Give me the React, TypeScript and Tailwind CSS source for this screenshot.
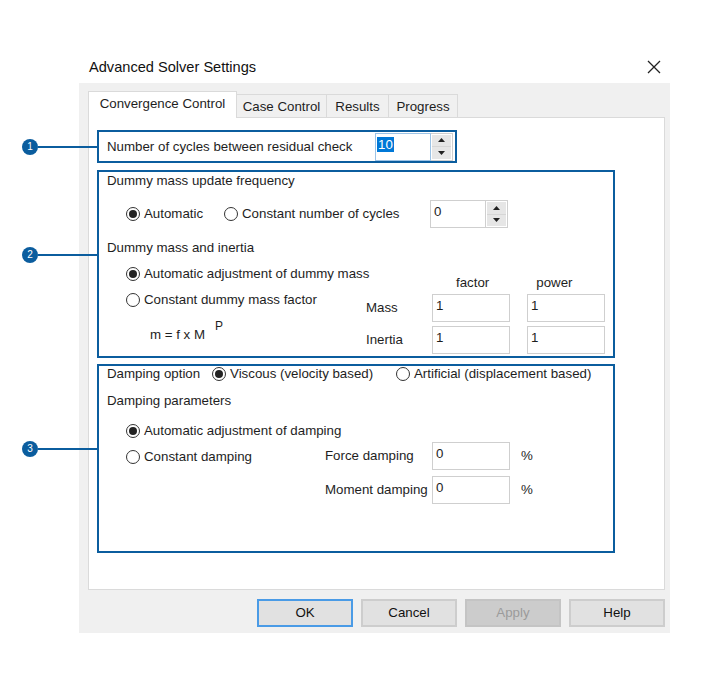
import React from "react";

const BLUE = "border-[#0b5d9e]";

function Radio({ checked, label }: { checked?: boolean; label: string }) {
  return (
    <div className="flex items-center gap-[4px] whitespace-nowrap">
      <span className="flex h-[14px] w-[14px] shrink-0 items-center justify-center rounded-full border border-[#333] bg-white">
        {checked && <span className="h-[8px] w-[8px] rounded-full bg-[#222]" />}
      </span>
      <span>{label}</span>
    </div>
  );
}

function Field({ value }: { value: string }) {
  return (
    <div className="h-[28px] w-[78px] border border-[#cfcfcf] bg-white pl-[3px] pt-[3px] leading-[15px]">
      {value}
    </div>
  );
}

function Spin({ value, focused }: { value: string; focused?: boolean }) {
  return (
    <div className="flex h-[28px] w-[78px]">
      <div
        className={
          focused
            ? "flex-1 border border-[#9cc3e6] bg-white pl-[1px] pt-[3px] leading-[15px]"
            : "flex-1 border border-[#cfcfcf] bg-white pl-[3px] pt-[3px] leading-[15px]"
        }
      >
        {focused ? <span className="bg-[#0078d7] px-[1px] text-white">{value}</span> : value}
      </div>
      <div className="flex w-[22px] flex-col border border-l-0 border-[#cfcfcf] bg-white p-[1px]">
        <div className="flex flex-1 items-center justify-center border-b border-[#d6d6d6] bg-[#e6e6e6]">
          <svg width="7" height="4" viewBox="0 0 7 4"><path d="M0 4 L3.5 0 L7 4 Z" fill="#222" /></svg>
        </div>
        <div className="flex flex-1 items-center justify-center bg-[#e6e6e6]">
          <svg width="7" height="4" viewBox="0 0 7 4"><path d="M0 0 L3.5 4 L7 0 Z" fill="#222" /></svg>
        </div>
      </div>
    </div>
  );
}

function Callout({ n, top }: { n: string; top: number }) {
  return (
    <div className="absolute left-[22px] flex items-center" style={{ top: top - 8 }}>
      <div className="flex h-[16px] w-[16px] items-center justify-center rounded-full bg-[#0b5d9e] text-[10px] text-white">
        {n}
      </div>
      <div className="h-[1.5px] w-[59px] bg-[#0b5d9e]" />
    </div>
  );
}

function Btn({ label, primary, disabled }: { label: string; primary?: boolean; disabled?: boolean }) {
  const cls = primary
    ? "border-[#4a9be6] bg-[#e1e1e1] text-[#111]"
    : disabled
    ? "border-[#c4c4c4] bg-[#cccccc] text-[#9b9b9b]"
    : "border-[#cdcdcd] bg-[#e1e1e1] text-[#111]";
  return (
    <div className={`flex h-[28px] w-[96px] items-center justify-center border-2 ${cls}`}>{label}</div>
  );
}

export default function App() {
  return (
    <div
      className="relative h-[679px] w-[701px] bg-white text-[13.3px] leading-[16px] text-[#1e1e1e]"
      style={{ fontFamily: '"Liberation Sans", Arial, sans-serif' }}
    >
      <div className="ml-[79px] w-[591px] pt-[47px]">
        {/* title bar */}
        <div className="flex h-[36px] items-center justify-between pl-[10px] pr-[8px] pt-[4px]">
          <span className="text-[14.6px] text-[#111]">Advanced Solver Settings</span>
          <svg width="14" height="14" viewBox="0 0 14 14" className="mr-[1px]">
            <path d="M1 1 L13 13 M13 1 L1 13" stroke="#222" strokeWidth="1.3" />
          </svg>
        </div>

        {/* body */}
        <div className="flex h-[550px] flex-col bg-[#f0f0f0] pl-[9px] pr-[5px] pt-[8px]">
          {/* tabs */}
          <div className="relative z-10 flex h-[27px] items-end">
            <div className="flex h-[27px] w-[149px] items-center justify-center border border-b-0 border-[#dadada] bg-white pb-[2px]">
              Convergence Control
            </div>
            <div className="mb-[1px] flex h-[23px] w-[90px] items-center justify-center border border-l-0 border-b-0 border-[#dadada] bg-[#f0f0f0] pt-[2px]">
              Case Control
            </div>
            <div className="mb-[1px] flex h-[23px] w-[62px] items-center justify-center border border-l-0 border-b-0 border-[#dadada] bg-[#f0f0f0] pt-[2px]">
              Results
            </div>
            <div className="mb-[1px] flex h-[23px] w-[69px] items-center justify-center border border-l-0 border-b-0 border-[#dadada] bg-[#f0f0f0] pt-[2px]">
              Progress
            </div>
          </div>

          {/* panel */}
          <div className="-mt-[1px] flex h-[473px] flex-col border border-[#dadada] bg-white pl-[8px] pt-[12px]">
            {/* section 1 */}
            <div className={`flex h-[33px] w-[360px] items-center justify-between border-2 ${BLUE} pl-[8px] pr-[2px]`}>
              <span>Number of cycles between residual check</span>
              <Spin value="10" focused />
            </div>

            {/* section 2 */}
            <div className={`mt-[7px] flex h-[188px] w-[518px] flex-col border-2 ${BLUE} pl-[8px]`}>
              <div className="h-[17px] pt-[1px]">Dummy mass update frequency</div>
              <div className="mt-[11px] flex h-[28px] items-center">
                <div className="ml-[19px] w-[98px]">
                  <Radio checked label="Automatic" />
                </div>
                <div className="w-[206px]">
                  <Radio label="Constant number of cycles" />
                </div>
                <Spin value="0" />
              </div>
              <div className="mt-[12px] h-[16px]">Dummy mass and inertia</div>
              <div className="flex">
                <div className="flex w-[259px] shrink-0 flex-col pl-[19px] pt-[9px]">
                  <div className="flex h-[18px] items-center">
                    <Radio checked label="Automatic adjustment of dummy mass" />
                  </div>
                  <div className="mt-[8px] flex h-[18px] items-center">
                    <Radio label="Constant dummy mass factor" />
                  </div>
                  <div className="mt-[17px] flex h-[18px] items-center pl-[24px]">
                    <span>m = f x M</span>
                    <span className="relative -top-[9px] ml-[10px] text-[12px]">P</span>
                  </div>
                </div>
                <div className="flex flex-col pt-[19px]">
                  <div className="flex h-[16px]">
                    <span className="ml-[90px]">factor</span>
                    <span className="ml-[47px]">power</span>
                  </div>
                  <div className="mt-[3px] flex items-center">
                    <span className="w-[66px]">Mass</span>
                    <Field value="1" />
                    <div className="w-[17px]" />
                    <Field value="1" />
                  </div>
                  <div className="mt-[4px] flex items-center">
                    <span className="w-[66px]">Inertia</span>
                    <Field value="1" />
                    <div className="w-[17px]" />
                    <Field value="1" />
                  </div>
                </div>
              </div>
            </div>

            {/* section 3 */}
            <div className={`mt-[6px] flex h-[189px] w-[518px] flex-col border-2 ${BLUE} pl-[8px]`}>
              <div className="flex h-[16px] items-center">
                <span className="w-[105px]">Damping option</span>
                <div className="w-[184px]">
                  <Radio checked label="Viscous (velocity based)" />
                </div>
                <Radio label="Artificial (displacement based)" />
              </div>
              <div className="mt-[11px] h-[16px]">Damping parameters</div>
              <div className="mt-[13px] flex h-[18px] items-center pl-[19px]">
                <Radio checked label="Automatic adjustment of damping" />
              </div>
              <div className="flex">
                <div className="w-[218px] shrink-0 pl-[19px] pt-[8px]">
                  <div className="flex h-[18px] items-center">
                    <Radio label="Constant damping" />
                  </div>
                </div>
                <div className="flex flex-col pt-[2px]">
                  <div className="flex items-center">
                    <span className="w-[107px]">Force damping</span>
                    <Field value="0" />
                    <span className="ml-[11px]">%</span>
                  </div>
                  <div className="mt-[6px] flex items-center">
                    <span className="w-[107px]">Moment damping</span>
                    <Field value="0" />
                    <span className="ml-[11px]">%</span>
                  </div>
                </div>
              </div>
            </div>
          </div>

          {/* buttons */}
          <div className="mt-[9px] flex gap-[8px] pl-[169px]">
            <Btn label="OK" primary />
            <Btn label="Cancel" />
            <Btn label="Apply" disabled />
            <Btn label="Help" />
          </div>
        </div>
      </div>

      <Callout n="1" top={147} />
      <Callout n="2" top={255} />
      <Callout n="3" top={449} />
    </div>
  );
}
